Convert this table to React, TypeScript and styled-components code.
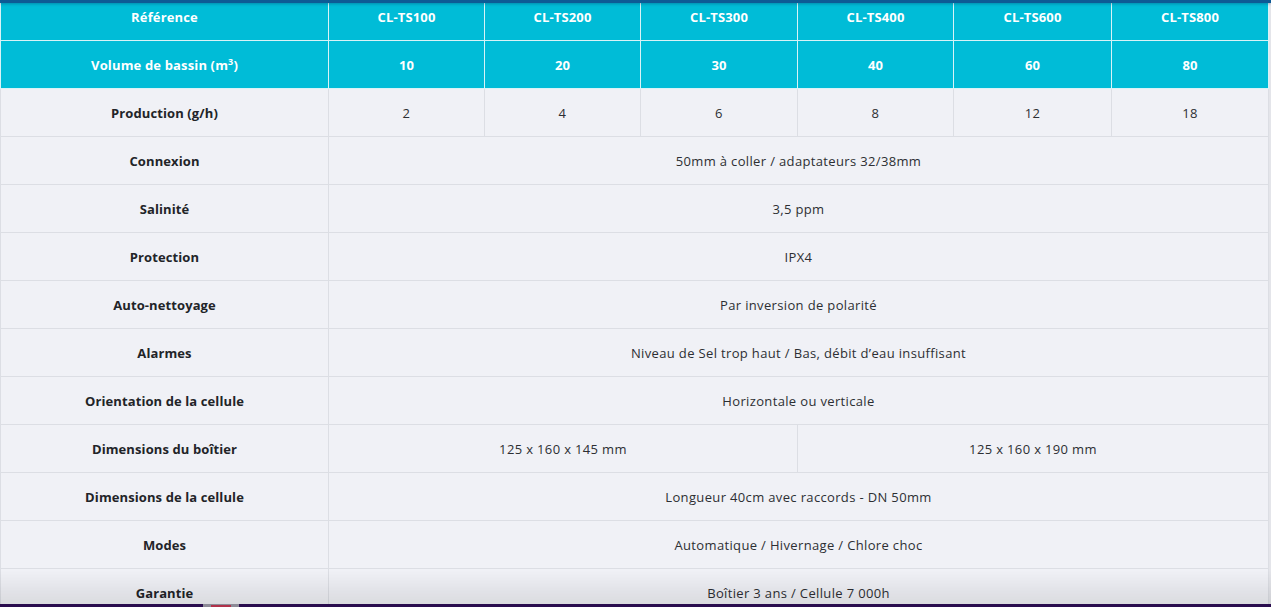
import React from "react";
import styled, { createGlobalStyle } from "styled-components";

const Global = createGlobalStyle`
  html, body { margin: 0; padding: 0; height: 607px; overflow: hidden; background: #e4e5ea; }
  body { font-family: "Open Sans", "Lato", "Liberation Sans", sans-serif; }
`;

const Page = styled.div`
  width: 1268px;
  margin-top: -7px;
`;

const TopBar = styled.div`
  position: fixed;
  top: 0;
  left: 0;
  right: 0;
  height: 3px;
  background: #0d5a95;
  box-shadow: 0 1px 3px rgba(0, 40, 90, 0.35);
  z-index: 3;
`;

const BottomShade = styled.div`
  position: fixed;
  left: 0;
  right: 0;
  bottom: 3px;
  height: 34px;
  background: linear-gradient(to bottom, rgba(0, 0, 0, 0), rgba(0, 0, 0, 0.09));
  pointer-events: none;
  z-index: 2;
`;

const BottomBar = styled.div`
  position: fixed;
  left: 0;
  right: 0;
  bottom: 0;
  height: 3px;
  background: #2a0d4e;
  z-index: 3;
`;

const Tab = styled.div`
  position: absolute;
  left: 203px;
  bottom: 0;
  width: 36px;
  height: 3px;
  background: #8c8a96;
  &::after {
    content: "";
    position: absolute;
    left: 8px;
    right: 8px;
    top: 1px;
    height: 2px;
    background: #b0324a;
  }
`;

const Table = styled.table`
  width: 1268px;
  border-collapse: collapse;
  table-layout: fixed;
  font-size: 13px;
`;

const HeadCell = styled.td`
  height: 47px;
  padding: 0;
  background: #00bcd7;
  color: #ffffff;
  font-weight: 700;
  letter-spacing: 0.15px;
  text-align: center;
  border: 1px solid #d8f3f7;
  border-top: none;
`;

const LabelCell = styled.td`
  height: 47px;
  padding: 0;
  background: #f0f1f6;
  color: #222428;
  font-weight: 700;
  letter-spacing: 0.1px;
  text-align: center;
  border: 1px solid #dcdee4;
`;

const ValueCell = styled.td`
  height: 47px;
  padding: 0;
  background: #f0f1f6;
  color: #2d2f33;
  font-weight: 400;
  letter-spacing: 0.35px;
  text-align: center;
  border: 1px solid #dcdee4;
`;

const Sup = styled.sup`
  font-size: 9px;
`;

const models = ["CL-TS100", "CL-TS200", "CL-TS300", "CL-TS400", "CL-TS600", "CL-TS800"];
const volumes = ["10", "20", "30", "40", "60", "80"];
const production = ["2", "4", "6", "8", "12", "18"];

const spanRows: [string, string][] = [
  ["Connexion", "50mm à coller / adaptateurs 32/38mm"],
  ["Salinité", "3,5 ppm"],
  ["Protection", "IPX4"],
  ["Auto-nettoyage", "Par inversion de polarité"],
  ["Alarmes", "Niveau de Sel trop haut / Bas, débit d’eau insuffisant"],
  ["Orientation de la cellule", "Horizontale ou verticale"],
];

const tailRows: [string, string][] = [
  ["Dimensions de la cellule", "Longueur 40cm avec raccords - DN 50mm"],
  ["Modes", "Automatique / Hivernage / Chlore choc"],
  ["Garantie", "Boîtier 3 ans / Cellule 7 000h"],
];

export default function App() {
  return (
    <>
      <Global />
      <TopBar />
      <Page>
        <Table>
          <colgroup>
            <col style={{ width: 328 }} />
            <col style={{ width: 156 }} />
            <col style={{ width: 156 }} />
            <col style={{ width: 157 }} />
            <col style={{ width: 156 }} />
            <col style={{ width: 158 }} />
            <col style={{ width: 157 }} />
          </colgroup>
          <tbody>
            <tr>
              <HeadCell>Référence</HeadCell>
              {models.map((m) => (
                <HeadCell key={m}>{m}</HeadCell>
              ))}
            </tr>
            <tr>
              <HeadCell>
                Volume de bassin (m<Sup>3</Sup>)
              </HeadCell>
              {volumes.map((v) => (
                <HeadCell key={v}>{v}</HeadCell>
              ))}
            </tr>
            <tr>
              <LabelCell>Production (g/h)</LabelCell>
              {production.map((p) => (
                <ValueCell key={p}>{p}</ValueCell>
              ))}
            </tr>
            {spanRows.map(([l, v]) => (
              <tr key={l}>
                <LabelCell>{l}</LabelCell>
                <ValueCell colSpan={6}>{v}</ValueCell>
              </tr>
            ))}
            <tr>
              <LabelCell>Dimensions du boîtier</LabelCell>
              <ValueCell colSpan={3}>125 x 160 x 145 mm</ValueCell>
              <ValueCell colSpan={3}>125 x 160 x 190 mm</ValueCell>
            </tr>
            {tailRows.map(([l, v]) => (
              <tr key={l}>
                <LabelCell>{l}</LabelCell>
                <ValueCell colSpan={6}>{v}</ValueCell>
              </tr>
            ))}
          </tbody>
        </Table>
      </Page>
      <BottomShade />
      <BottomBar>
        <Tab />
      </BottomBar>
    </>
  );
}
